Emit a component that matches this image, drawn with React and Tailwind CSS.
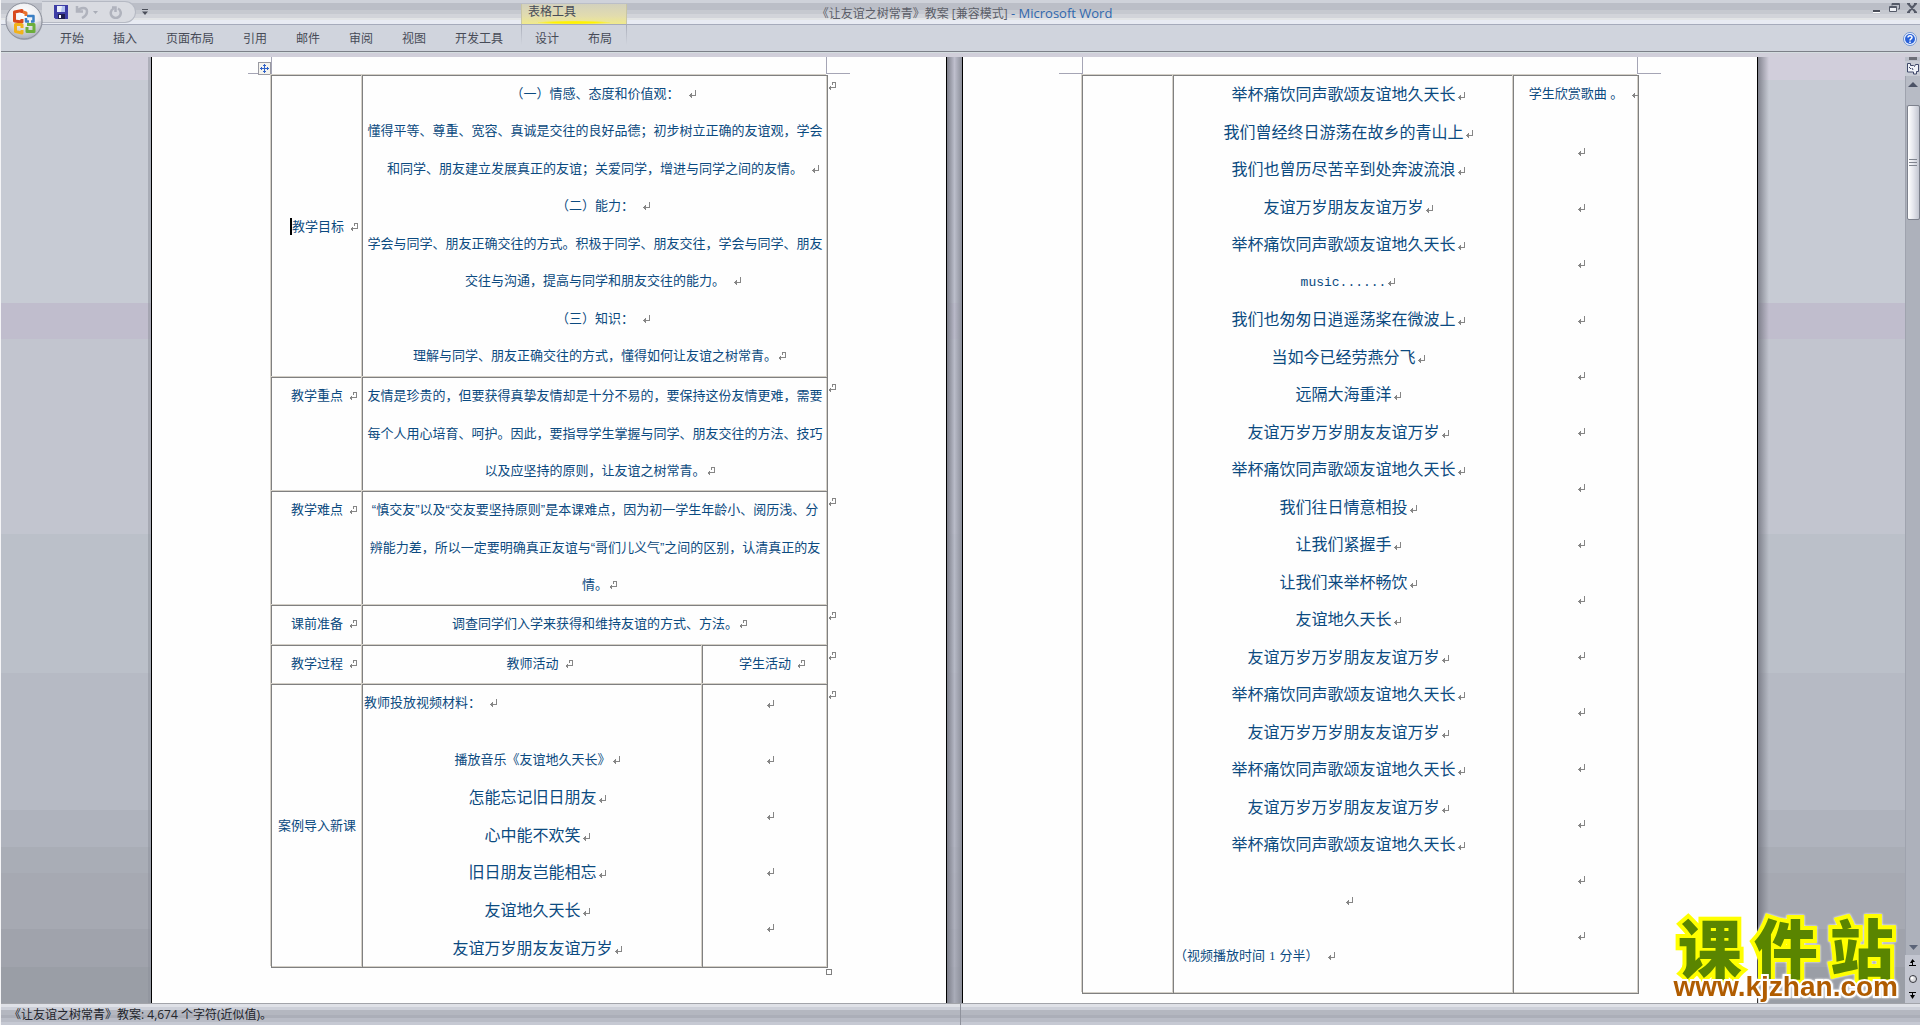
import React from "react";

const tabs = ["开始", "插入", "页面布局", "引用", "邮件", "审阅", "视图", "开发工具"];
const contextTabs = ["设计", "布局"];

const goals = [
  { text: "（一）情感、态度和价值观：", spaced: true },
  { text: "懂得平等、尊重、宽容、真诚是交往的良好品德；初步树立正确的友谊观，学会", mark: false },
  { text: "和同学、朋友建立发展真正的友谊；关爱同学，增进与同学之间的友情。", spaced: true },
  { text: "（二）能力：", spaced: true },
  { text: "学会与同学、朋友正确交往的方式。积极于同学、朋友交往，学会与同学、朋友", mark: false },
  { text: "交往与沟通，提高与同学和朋友交往的能力。", spaced: true },
  { text: "（三）知识：", spaced: true },
  { text: "理解与同学、朋友正确交往的方式，懂得如何让友谊之树常青。", cell: true },
];

const keyPoints = [
  { text: "友情是珍贵的，但要获得真挚友情却是十分不易的，要保持这份友情更难，需要", mark: false },
  { text: "每个人用心培育、呵护。因此，要指导学生掌握与同学、朋友交往的方法、技巧", mark: false },
  { text: "以及应坚持的原则，让友谊之树常青。", cell: true },
];

const difficulties = [
  { text: "“慎交友”以及“交友要坚持原则”是本课难点，因为初一学生年龄小、阅历浅、分", mark: false },
  { text: "辨能力差，所以一定要明确真正友谊与“哥们儿义气”之间的区别，认清真正的友", mark: false },
  { text: "情。", cell: true },
];

const songStart = ["怎能忘记旧日朋友", "心中能不欢笑", "旧日朋友岂能相忘", "友谊地久天长", "友谊万岁朋友友谊万岁"];

const songRest = [
  "举杯痛饮同声歌颂友谊地久天长",
  "我们曾经终日游荡在故乡的青山上",
  "我们也曾历尽苦辛到处奔波流浪",
  "友谊万岁朋友友谊万岁",
  "举杯痛饮同声歌颂友谊地久天长",
  "music......",
  "我们也匆匆日逍遥荡桨在微波上",
  "当如今已经劳燕分飞",
  "远隔大海重洋",
  "友谊万岁万岁朋友友谊万岁",
  "举杯痛饮同声歌颂友谊地久天长",
  "我们往日情意相投",
  "让我们紧握手",
  "让我们来举杯畅饮",
  "友谊地久天长",
  "友谊万岁万岁朋友友谊万岁",
  "举杯痛饮同声歌颂友谊地久天长",
  "友谊万岁万岁朋友友谊万岁",
  "举杯痛饮同声歌颂友谊地久天长",
  "友谊万岁万岁朋友友谊万岁",
  "举杯痛饮同声歌颂友谊地久天长",
];

const cellBorder = "relative border-t border-l border-[#808080] p-0 shadow-[-1px_-1px_0_#d4d0c8]";

// Paragraph mark, takes no room in the line so the text stays centered
function Mark({ spaced, cell }) {
  const gap = spaced ? (cell ? "ml-[6px]" : "ml-2") : "ml-px";
  return (
    <span className="inline-block w-0" aria-hidden="true">
      <svg width="8" height="8" viewBox="0 0 8 8" className={`${gap} max-w-none`} shapeRendering="crispEdges">
        {cell ? (
          <path d="M4 .5H7.5V5.5H1M2.5 3.5V7.500M1.500 4.500V6.500M4.500 .5V3" fill="none" stroke="#868686" />
        ) : (
          <path d="M7.5 0V5.5H1M3.5 3V8M2.5 4V7" fill="none" stroke="#868686" />
        )}
      </svg>
    </span>
  );
}

// Mark at the end of each table row, outside the right border
function RowEnd() {
  return (
    <span className="absolute top-1 left-full leading-3">
      <Mark cell />
    </span>
  );
}

function Line({ text, spaced, cell, mark = true }) {
  return (
    <p className="leading-9">
      {text}
      {mark && <Mark spaced={spaced} cell={cell} />}
    </p>
  );
}

function Song({ text }) {
  return (
    <p className={text.startsWith("music") ? "font-['Liberation_Mono','Noto_Sans_CJK_SC',monospace] text-[13px] leading-9" : "text-base leading-9"}>
      {text}
      <Mark />
    </p>
  );
}

function Label({ children, top }) {
  return (
    <th className={`${cellBorder} font-normal ${top ? "align-top leading-9" : "align-middle"}`} scope="row">
      {children}
    </th>
  );
}

function Marks({ count }) {
  return Array.from({ length: count }, (_, i) => (
    <p key={i} className="leading-9">
      <Mark />
    </p>
  ));
}

function Page({ handle, children }) {
  return (
    <section className="w-[796px] shrink-0 border-x border-black bg-[#fefefe]">
      <div className="flex h-[17px] justify-between px-24">
        <div className="relative w-6 border-r border-b border-[#a5a5b5]">
          {handle && (
            <button aria-label="移动表格" className="absolute right-0 -bottom-[2px] flex size-[13px] items-center justify-center border border-[#9a9aa2] bg-[#f4f3ee]">
              <svg width="9" height="9" viewBox="0 0 9 9" fill="#2f62c9" shapeRendering="crispEdges">
                <path d="M4 0h1v9H4zM0 4h9v1H0zM3 1h3v1H3zM3 7h3v1H3zM1 3h1v3H1zM7 3h1v3H7z" />
              </svg>
            </button>
          )}
        </div>
        <div className="w-6 border-b border-l border-[#a5a5b5]" />
      </div>
      <div className="mt-px pr-[118px] pl-[119px]">{children}</div>
    </section>
  );
}

function LessonTable({ children }) {
  return (
    <table className="w-full table-fixed border-separate border-spacing-0 border-r border-b border-[#808080] text-center text-[13px] whitespace-nowrap text-[#0b4a80] shadow-[inset_-1px_-1px_0_#d4d0c8]">
      <colgroup>
        <col className="w-[91px]" />
        <col />
        <col className="w-[125px]" />
      </colgroup>
      <tbody>{children}</tbody>
    </table>
  );
}

function OfficeButton() {
  return (
    <button aria-label="Office 按钮" className="absolute top-[2px] left-1 z-10">
      <svg width="39" height="39" viewBox="0 0 39 39">
        <defs>
          <radialGradient id="orb" cx="50%" cy="30%" r="75%">
            <stop offset="0" stopColor="#ffffff" />
            <stop offset=".5" stopColor="#e4e5ea" />
            <stop offset="1" stopColor="#a3a7b3" />
          </radialGradient>
        </defs>
        <circle cx="19.500" cy="20" r="18" fill="#8f939e" opacity=".5" />
        <circle cx="19" cy="19" r="18" fill="url(#orb)" stroke="#8b8f9a" />
        <path d="M2 19a17 17 0 0 1 34 0q-17 5-34 0z" fill="#fff" opacity=".35" />
        <g fill="none" strokeWidth="3" strokeLinejoin="round">
          <path d="M17 11V8.500l-7.500 1.500v9l7.500 1V17" stroke="#d8481c" />
          <path d="M18 10l3 1v3" stroke="#e9712c" />
          <path d="M22 14h6.500v5.500H26M24 19.500h-3V16" stroke="#3b7fc4" strokeWidth="2.500" />
          <path d="M17 22.500h-6.500v7l6.500 1.500V28M17 22v4" stroke="#f2b21b" />
          <path d="M22 22.500h7v7h-7V25" stroke="#6cae3a" />
        </g>
      </svg>
    </button>
  );
}

function QuickAccess() {
  return (
    <div className="ml-[41px] flex h-[23px] items-end">
      <div className="flex h-[22px] w-[94px] items-center gap-[7px] rounded-r-full border border-l-0 border-[#b5b9c3] bg-[#d9dbe1] pl-3">
        <button aria-label="保存">
          <svg width="14" height="14" viewBox="0 0 14 14">
            <path d="M0 0h14v14H1.500L0 12.500z" fill="#3d3da6" />
            <path d="M3 1h8v6H3z" fill="#e9eefb" />
            <path d="M8 1h3v6H7z" fill="#b4c3f0" />
            <path d="M4 9h7v5H4z" fill="#1d1d50" />
            <path d="M5 10h2v3H5z" fill="#fff" />
          </svg>
        </button>
        <button aria-label="撤消" className="flex items-center gap-1">
          <svg width="14" height="14" viewBox="0 0 14 14" fill="none" stroke="#b0b3bd" strokeWidth="2.500">
            <path d="M2 1v5.500h6M2.500 6C5 2 12 1.500 12 6.500c0 3-2 5-5 6.500" />
          </svg>
          <svg width="5" height="3" viewBox="0 0 5 3" fill="#a9adb7">
            <path d="M0 0h5L2.500 3z" />
          </svg>
        </button>
        <button aria-label="重复" className="ml-1">
          <svg width="13" height="13" viewBox="0 0 13 13" fill="none" stroke="#b0b3bd" strokeWidth="2.500">
            <path d="M4.500 2.500A5 5 0 1 0 9 2.500M3 1.500h3.500V6" />
          </svg>
        </button>
      </div>
      <button aria-label="自定义快速访问工具栏" className="ml-[6px] self-center">
        <svg width="6" height="6" viewBox="0 0 6 6" fill="#4b4f5a">
          <path d="M0 0h6v1H0zM0 2.500h6L3 6z" />
        </svg>
      </button>
    </div>
  );
}

function TitleBar() {
  return (
    <div className="grid h-6 grid-cols-[1fr_auto_1fr] bg-[linear-gradient(#cfd2da_0_3px,#bbbec7_3px_10px,#c6c9d0_10px_14px,#d2d4da_14px_18px,#e2e4e6_18px_20px,#e8ebf3_20px)]">
      <QuickAccess />
      <h1 className="pt-px pl-2 text-xs leading-6 text-[#5b5e68]">
        《让友谊之树常青》教案 [兼容模式]
        <span className="text-[13px] text-[#2f68ad]"> - Microsoft Word</span>
      </h1>
      <div className="flex items-start justify-end gap-[7px] pt-[3px] pr-[3px] text-[#555a68]">
        <button aria-label="最小化">
          <svg width="10" height="10" viewBox="0 0 10 10">
            <path d="M1 7h7v2H1z" fill="#4a4e59" />
            <path d="M1 9h7v1H1z" fill="#fff" />
          </svg>
        </button>
        <button aria-label="还原">
          <svg width="11" height="10" viewBox="0 0 11 10" fill="none" stroke="currentColor">
            <path d="M3 2.500V.5H10.500V6H9" />
            <path d="M.5 3.500h7v5h-7z" fill="#eef0f5" />
            <path d="M1 4.500h6M3 1.500h7" />
          </svg>
        </button>
        <button aria-label="关闭">
          <svg width="10" height="10" viewBox="0 0 10 10" fill="none" stroke="currentColor" strokeWidth="2">
            <path d="M1.500 1l7 8M8.500 1l-7 8M0 .5h3M7 .5h3M0 9.500h3M7 9.500h3" />
          </svg>
        </button>
      </div>
    </div>
  );
}

function Ribbon() {
  return (
    <nav className="flex h-[27px] items-stretch border-t border-[#a6abbb] bg-[#d0d4dd] pt-0.5 text-xs text-[#474b57]">
      <div className="flex w-[520px] gap-[29px] pl-[59px]">
        {tabs.map((tab) => (
          <button key={tab}>{tab}</button>
        ))}
      </div>
      <div className="relative flex w-[106px] gap-[29px] pl-[14px]">
        {/* 表格工具 group title sits over the title bar */}
        <div className="absolute -top-[23px] left-0 h-5 w-full border-x border-[#c9c6a4] bg-[linear-gradient(#d3d1bd,#e2dcae_60%,#f0ea8c)] pl-[6px] leading-4">
          表格工具
          <span className="absolute right-4 bottom-0 left-4 h-[3px] bg-[radial-gradient(#fff200_40%,transparent_80%)]" />
        </div>
        <span className="absolute -top-0.5 left-0 h-5 w-px bg-linear-to-b from-[#a9adb9] to-transparent" />
        <span className="absolute -top-0.5 right-0 h-5 w-px bg-linear-to-b from-[#a9adb9] to-transparent" />
        {contextTabs.map((tab) => (
          <button key={tab}>{tab}</button>
        ))}
      </div>
      <button aria-label="帮助" className="mr-[3px] ml-auto">
        <svg width="14" height="14" viewBox="0 0 14 14">
          <circle cx="7" cy="7" r="6.500" fill="#f2f6ff" stroke="#6f93d0" />
          <circle cx="7" cy="7" r="5" fill="#2a62d8" />
          <path d="M5 5.500C5 3 9.200 3 9 5.500 9 7 7 6.800 7 8.500M7 9.500V11" fill="none" stroke="#fff" strokeWidth="1.500" />
        </svg>
      </button>
    </nav>
  );
}

function ScrollBar() {
  return (
    <div className="flex w-[15px] shrink-0 flex-col items-center bg-[#bcc0ca]">
      <div className="h-[3px] w-2 shrink-0 bg-[#6b6d76]" />
      <button aria-label="标尺" className="mt-px flex h-[15px] w-full shrink-0 items-center justify-center bg-[#c9ccd5]">
        <svg width="13" height="13" viewBox="0 0 13 13" fill="#f0f2f8" stroke="#40496a">
          <path d="M1.500 1.500h3v2h3l1 1 1-2h3v7h-2v2.500h-3V10h-6z" />
          <path d="M3 5l2 2M6 6l1 2" fill="none" />
        </svg>
      </button>
      <div className="flex w-full flex-1 flex-col items-center border-l border-[#9fa3ae] bg-[#adb1bb]">
        <button aria-label="向上滚动" className="flex h-[29px] w-full items-center justify-center bg-[#b7bbc5] pb-3">
          <svg width="10" height="5" viewBox="0 0 10 5" fill="#4c5366">
            <path d="M5 0l5 5H0z" />
          </svg>
        </button>
        <div className="flex h-[115px] w-[13px] flex-col items-center justify-center gap-[2px] rounded-xs border border-[#7d818d] bg-linear-to-r from-white via-[#e4e5ec] to-[#c3c6d1]">
          <span className="h-px w-2 bg-[#80848f]" />
          <span className="h-px w-2 bg-[#80848f]" />
          <span className="h-px w-2 bg-[#80848f]" />
        </div>
        <button aria-label="向下滚动" className="mt-auto flex h-4 w-full items-center justify-center">
          <svg width="9" height="5" viewBox="0 0 9 5" fill="#5b6478">
            <path d="M0 0h9L4.500 5z" />
          </svg>
        </button>
      </div>
      <div className="flex h-12 w-full shrink-0 flex-col items-center justify-around bg-[#c3c6d0]">
        <button aria-label="前一页">
          <svg width="7" height="8" viewBox="0 0 7 8" fill="#000">
            <path d="M3.500 0L6 3H4v1h3v0L6 4H4v2h3v1H0V6h3V4H1L3.500 0z" />
          </svg>
        </button>
        <button aria-label="选择浏览对象">
          <svg width="8" height="8" viewBox="0 0 8 8">
            <circle cx="4" cy="4" r="3.500" fill="#d9dade" stroke="#33353c" />
            <circle cx="3" cy="3" r="1.500" fill="#fff" />
          </svg>
        </button>
        <button aria-label="下一页">
          <svg width="7" height="8" viewBox="0 0 7 8" fill="#000">
            <path d="M0 1h7v1H4v2h2L3.500 8 1 4h2V2H0z" />
          </svg>
        </button>
      </div>
    </div>
  );
}

function Watermark() {
  return (
    <div className="absolute right-[22px] bottom-0 flex flex-col items-center drop-shadow-[0_0_1px_#fff]">
      <div className="flex gap-3 font-['Noto_Sans_CJK_SC',sans-serif] text-[64px] leading-[52px] font-black text-[#5a8500] [-webkit-text-stroke:8px_#ffff00] [paint-order:stroke_fill]">
        <span>课</span>
        <span>件</span>
        <span>站</span>
      </div>
      <a href="#" className="font-['Liberation_Sans',sans-serif] text-[28px] leading-8 font-bold text-[#b05c00] [-webkit-text-stroke:4px_#ffffff] [paint-order:stroke_fill]">
        www.kjzhan.com
      </a>
    </div>
  );
}

export default function App() {
  return (
    <div className="flex h-screen flex-col overflow-hidden border-l border-[#f4f4f6] font-['Open_Sans','Noto_Sans_CJK_SC',sans-serif]">
      <header className="relative shrink-0">
        <OfficeButton />
        <TitleBar />
        <Ribbon />
        <div className="h-[6px] border-t border-[#7c8088] bg-[#d1cfda] shadow-[inset_0_1px_0_#d5dde0]" />
      </header>

      <main className="relative flex min-h-0 flex-1 overflow-hidden bg-[linear-gradient(#d1cedb_0_2.4%,#c7cbd4_2.4%_26%,#c0bdcd_26%_29.8%,#c2c5cf_29.8%_50.4%,#bbc0c9_50.4%_65.1%,#b6bac4_65.1%_79.6%,#afb3bd_79.6%_83.5%,#a9adb6_83.5%_86.3%,#a6a9b2_86.3%_92.2%,#a0a3ac_92.2%_96.2%,#9a9ea6_96.2%)] font-['Liberation_Sans','Noto_Sans_CJK_SC',sans-serif]">
        <div className="flex-1" />
        <div className="w-[3px] bg-[#8c8f9a]/50" />
        <Page handle>
          <LessonTable>
            <tr>
              <Label>
                <span className="border-l-2 border-black py-px">教学目标</span>
                <Mark spaced cell />
              </Label>
              <td colSpan={2} className={`${cellBorder} h-[302px] align-top`}>
                <div className="flex h-[298px] flex-col justify-between">
                  {goals.map((line) => (
                    <Line key={line.text} {...line} />
                  ))}
                </div>
                <RowEnd />
              </td>
            </tr>
            <tr>
              <Label top>
                教学重点
                <Mark spaced cell />
              </Label>
              <td colSpan={2} className={`${cellBorder} h-[114px] align-top`}>
                <div className="flex h-[111px] flex-col justify-between">
                  {keyPoints.map((line) => (
                    <Line key={line.text} {...line} />
                  ))}
                </div>
                <RowEnd />
              </td>
            </tr>
            <tr>
              <Label top>
                教学难点
                <Mark spaced cell />
              </Label>
              <td colSpan={2} className={`${cellBorder} h-[114px] align-top`}>
                <div className="flex h-[111px] flex-col justify-between">
                  {difficulties.map((line) => (
                    <Line key={line.text} {...line} />
                  ))}
                </div>
                <RowEnd />
              </td>
            </tr>
            <tr>
              <Label top>
                课前准备
                <Mark spaced cell />
              </Label>
              <td colSpan={2} className={`${cellBorder} h-10 align-top leading-9`}>
                调查同学们入学来获得和维持友谊的方式、方法。
                <Mark cell />
                <RowEnd />
              </td>
            </tr>
            <tr>
              <Label top>
                教学过程
                <Mark spaced cell />
              </Label>
              <td className={`${cellBorder} h-[39px] align-top leading-9`}>
                教师活动
                <Mark spaced cell />
              </td>
              <td className={`${cellBorder} align-top leading-9`}>
                学生活动
                <Mark spaced cell />
                <RowEnd />
              </td>
            </tr>
            <tr>
              <Label>案例导入新课</Label>
              <td className={cellBorder}>
                <p className="pl-px text-left leading-9">
                  教师投放视频材料：
                  <Mark spaced />
                </p>
                <div className="mt-[21px] flex h-[225px] flex-col justify-between">
                  <Line text="播放音乐《友谊地久天长》" />
                  {songStart.map((line) => (
                    <Song key={line} text={line} />
                  ))}
                </div>
              </td>
              <td className={`${cellBorder} align-top`}>
                <div className="flex flex-col gap-5 pt-px">
                  <Marks count={5} />
                </div>
                <RowEnd />
              </td>
            </tr>
          </LessonTable>
          <div className="mt-px flex justify-end">
            <span className="-mr-1 size-[6px] border border-[#808080]" />
          </div>
        </Page>

        <div className="w-[15px] shrink-0 bg-linear-to-r from-[#7d7f8a] via-[#b3b5c4]/60 to-[#8c8f9a]" />

        <Page>
          <LessonTable>
            <tr>
              <td className={cellBorder} />
              <td className={`${cellBorder} align-top`}>
                <div className="flex h-[787px] flex-col justify-between pt-px">
                  {songRest.map((line, i) => (
                    <Song key={i} text={line} />
                  ))}
                </div>
                <div className="mt-5 leading-9">
                  <Mark />
                </div>
                <p className="my-[19px] text-left leading-9">
                  （视频播放时间<span className="px-1 font-['Liberation_Serif',serif]">1</span>分半）
                  <Mark spaced />
                </p>
              </td>
              <td className={`${cellBorder} align-top`}>
                <div className="flex flex-col gap-5 overflow-hidden">
                  <p className="mb-0.5 leading-9">
                    学生欣赏歌曲&nbsp;。
                    <Mark spaced />
                  </p>
                  <Marks count={15} />
                </div>
              </td>
            </tr>
          </LessonTable>
        </Page>
        <div className="flex-1 bg-linear-to-r from-[#6f717c]/80 via-transparent via-[11px] to-transparent" />
        <ScrollBar />
        <Watermark />
      </main>

      <footer className="flex h-[22px] shrink-0 border-t border-[#a2a4aa] bg-[linear-gradient(#dfe1e7_0_3px,#cdd0d9_3px_6px,#b4b7c0_6px_11px,#abaeb8_11px_14px,#b9bcc6_14px_18px,#c6c9d3_18px)] text-xs leading-[21px] text-[#22242b]">
        <p className="w-1/2 border-r border-[#8f929c] pl-2">《让友谊之树常青》教案: 4,674 个字符(近似值)。</p>
      </footer>
    </div>
  );
}
